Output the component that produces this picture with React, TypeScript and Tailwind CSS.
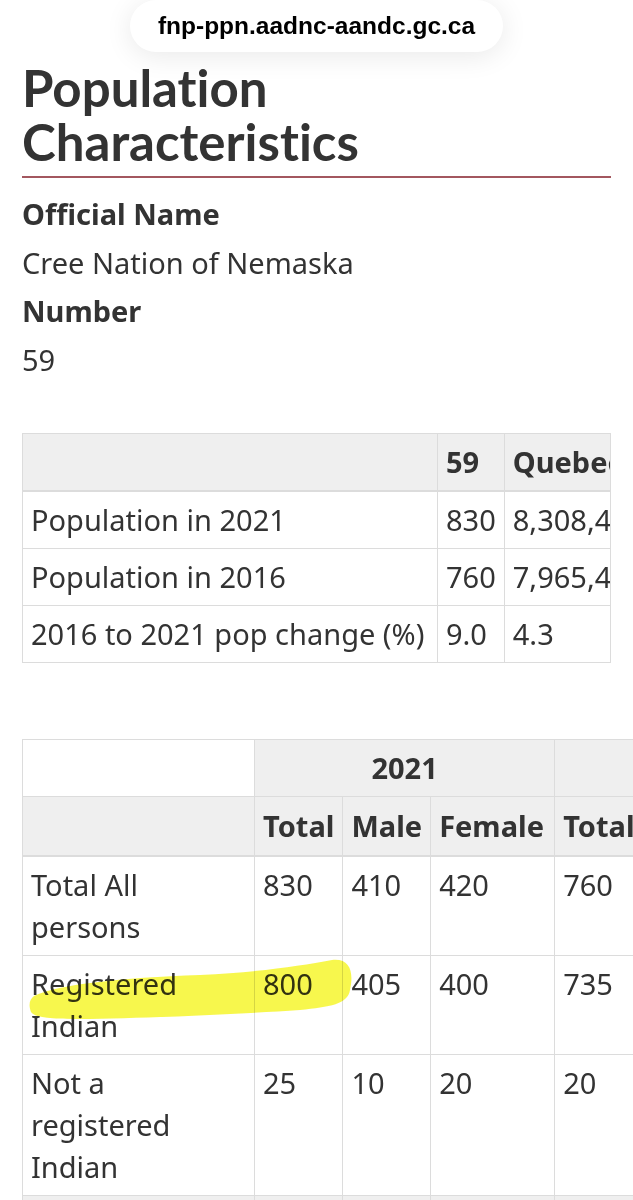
const body = { fontFamily: '"Noto Sans", "Open Sans", sans-serif' }

const summaryRows = [
  ['Population in 2021', '830', '8,308,485'],
  ['Population in 2016', '760', '7,965,450'],
  ['2016 to 2021 pop change (%)', '9.0', '4.3'],
]

const residencyRows = [
  ['Total All persons', '830', '410', '420', '760', '375', '385'],
  ['Registered Indian', '800', '405', '400', '735', '365', '370'],
  ['Not a registered Indian', '25', '10', '20', '20', '10', '10'],
]

export default function App() {
  return (
    <div className="relative min-h-[1200px] w-[633px] overflow-hidden bg-white text-[#333]" style={body}>
      {/* address bar pill */}
      <div className="flex justify-center">
        <div
          className="flex h-[52px] w-[373px] items-center justify-center rounded-full bg-white text-[24.5px] font-bold text-black shadow-[0_4px_28px_rgba(0,0,0,0.09)]"
          style={{ fontFamily: '"Liberation Sans", Arial, sans-serif' }}
        >
          fnp-ppn.aadnc-aandc.gc.ca
        </div>
      </div>

      <div className="px-[22px]">
        <h1
          className="mt-[9px] border-b-2 border-[#a3575f] pb-[7px] text-[51px] font-bold leading-[54px] text-[#333] [font-variant-ligatures:none]"
          style={{ fontFamily: 'Lato, sans-serif' }}
        >
          Population
          <br />
          Characteristics
        </h1>

        <dl className="mt-[12px] text-[29px] leading-[48.5px]">
          <dt className="font-bold">Official Name</dt>
          <dd>Cree Nation of Nemaska</dd>
          <dt className="font-bold">Number</dt>
          <dd>59</dd>
        </dl>

        <div className="mt-[49px] w-[589px] overflow-hidden border-r border-[#dcdcdc]">
          <table className="w-max border-collapse text-[29px] leading-[42px]">
            <thead>
              <tr className="bg-[#efefef]">
                <th className="w-[415px] border border-b-2 border-[#dcdcdc] px-2 py-[7px]" />
                <th className="border border-b-2 border-[#dcdcdc] px-2 py-[7px] text-left font-bold">59</th>
                <th className="border border-b-2 border-[#dcdcdc] px-2 py-[7px] text-left font-bold">Quebec</th>
              </tr>
            </thead>
            <tbody>
              {summaryRows.map((r) => (
                <tr key={r[0]}>
                  {r.map((c, i) => (
                    <td key={i} className="border border-[#dcdcdc] px-2 py-[7px] align-top whitespace-nowrap">
                      {c}
                    </td>
                  ))}
                </tr>
              ))}
            </tbody>
          </table>
        </div>

        <div className="mt-[76px] w-[611px] overflow-hidden">
          <table className="w-max table-fixed border-collapse text-[29px] leading-[42px]">
            <colgroup>
              <col className="w-[232px]" />
              <col className="w-[88px]" />
              <col className="w-[87px]" />
              <col className="w-[124px]" />
              <col className="w-[88px]" />
              <col className="w-[88px]" />
              <col className="w-[124px]" />
            </colgroup>
            <thead>
              <tr>
                <td className="border border-[#dcdcdc] bg-white px-2 py-[7px]" />
                <th colSpan={3} className="border border-[#dcdcdc] bg-[#efefef] px-2 py-[7px] text-center font-bold">
                  2021
                </th>
                <th colSpan={3} className="border border-[#dcdcdc] bg-[#efefef] px-2 py-[7px] text-center font-bold">
                  2016
                </th>
              </tr>
              <tr className="bg-[#efefef]">
                <th className="border border-b-2 border-[#dcdcdc] px-2 py-[8px]" />
                {['Total', 'Male', 'Female', 'Total', 'Male', 'Female'].map((h, i) => (
                  <th key={i} className="border border-b-2 border-[#dcdcdc] px-2 py-[8px] text-left font-bold">
                    {h}
                  </th>
                ))}
              </tr>
            </thead>
            <tbody>
              {residencyRows.map((r) => (
                <tr key={r[0]}>
                  {r.map((c, i) => (
                    <td key={i} className="border border-[#dcdcdc] px-2 py-[7px] align-top">
                      {c}
                    </td>
                  ))}
                </tr>
              ))}
              <tr className="bg-[#efefef]">
                {[0, 1, 2, 3, 4, 5, 6].map((i) => (
                  <td key={i} className="h-[57px] border border-[#dcdcdc]" />
                ))}
              </tr>
            </tbody>
          </table>
        </div>
      </div>

      {/* highlighter mark over "Registered 800" */}
      <svg className="pointer-events-none absolute left-0 top-0 mix-blend-multiply" width="633" height="1200">
        <path
          d="M34 996 C60 984 120 978 200 975 C260 972 300 966 332 960 C350 958 354 972 350 990 C348 1004 330 1007 300 1010 C240 1014 150 1018 90 1019 C60 1019 36 1019 31 1012 C28 1004 30 999 34 996 Z"
          fill="#f6f63a"
          opacity="0.9"
        />
      </svg>
    </div>
  )
}
